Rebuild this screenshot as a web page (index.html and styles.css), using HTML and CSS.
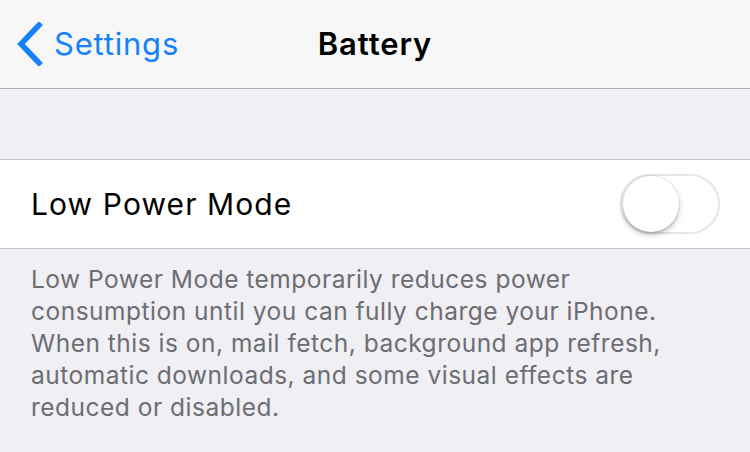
FILE: index.html
```html
<!DOCTYPE html>
<html lang="en">
<head>
<meta charset="utf-8">
<title>Battery</title>
<link rel="stylesheet" href="styles.css">
</head>
<body>
  <header class="nav">
    <a class="back" href="#">
      <svg class="chevron" width="30" height="44" viewBox="0 0 30 44" aria-hidden="true">
        <path d="M23 3 L5 22 L23 41" fill="none" stroke="currentColor" stroke-width="5.5" stroke-linecap="square" stroke-linejoin="miter"/>
      </svg>
      <span>Settings</span>
    </a>
    <h1 class="title">Battery</h1>
    <div class="nav-end"></div>
  </header>

  <div class="section-gap"></div>

  <section class="group">
    <div class="cell">
      <span class="cell-label">Low Power Mode</span>
      <span class="switch" role="switch" aria-checked="false">
        <span class="knob"></span>
      </span>
    </div>
  </section>

  <p class="footer-note">Low Power Mode temporarily reduces power<br>consumption until you can fully charge your iPhone.<br>When this is on, mail fetch, background app refresh,<br>automatic downloads, and some visual effects are<br>reduced or disabled.</p>
</body>
</html>
```
FILE: styles.css
```css
html, body {
  margin: 0;
  padding: 0;
}

body {
  background: #efeff4;
  font-family: Inter, "Liberation Sans", sans-serif;
  -webkit-font-smoothing: antialiased;
}

/* navigation bar */
.nav {
  display: grid;
  grid-template-columns: 1fr auto 1fr;
  align-items: center;
  height: 88px;
  background: #f7f7f8;
  border-bottom: 1px solid #b2b2b2;
}

.back {
  display: flex;
  align-items: center;
  gap: 8px;
  padding-left: 16px;
  color: #1582fb;
  text-decoration: none;
  font-size: 31px;
  letter-spacing: 0.8px;
}

.back span {
  margin-top: -2px;
}

.chevron {
  display: block;
}

.title {
  margin: -2px 0 0;
  font-size: 31px;
  font-weight: 600;
  color: #000;
  letter-spacing: 0.9px;
}

.section-gap {
  height: 70px;
}

/* table group */
.group {
  background: #fff;
  border-top: 1px solid #c8c7cc;
  border-bottom: 1px solid #c8c7cc;
}

.cell {
  display: flex;
  align-items: center;
  justify-content: space-between;
  height: 88px;
  padding: 0 30px 0 31px;
}

.cell-label {
  font-size: 30px;
  color: #000;
  letter-spacing: 1.1px;
}

/* toggle switch, off state */
.switch {
  display: flex;
  align-items: center;
  box-sizing: border-box;
  width: 100px;
  height: 60px;
  padding: 0 1px;
  border: 2px solid #e5e5ea;
  border-radius: 30px;
  background: #fff;
}

.knob {
  width: 56px;
  height: 56px;
  border-radius: 50%;
  background: #fff;
  box-shadow: 0 0 0 1px rgba(0, 0, 0, 0.06), 0 3px 6px rgba(0, 0, 0, 0.22), 0 3px 1px rgba(0, 0, 0, 0.06);
}

.footer-note {
  margin: 0;
  padding: 14px 31px 0;
  font-size: 24.5px;
  line-height: 32px;
  color: #6d6d72;
  letter-spacing: 0.5px;
}
```
